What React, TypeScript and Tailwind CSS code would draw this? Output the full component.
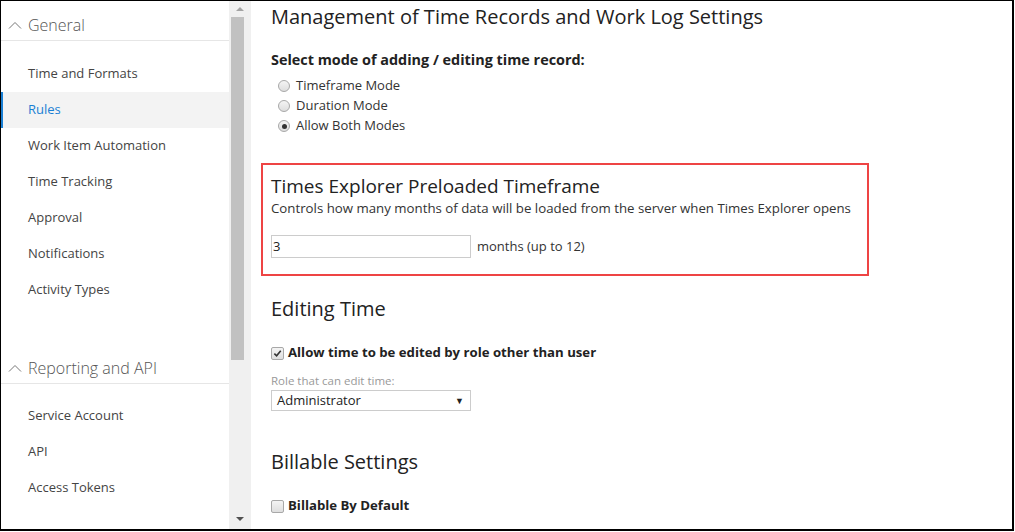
const font = { fontFamily: '"Open Sans", "Noto Sans", sans-serif' }

const generalItems = ['Time and Formats', 'Rules', 'Work Item Automation', 'Time Tracking', 'Approval', 'Notifications', 'Activity Types']
const reportingItems = ['Service Account', 'API', 'Access Tokens']

function NavItem({ label, active }: { label: string; active?: boolean }) {
  return (
    <div
      className={`h-9 flex items-center text-[13px] ${
        active ? 'bg-[#f3f3f3] text-[#1a7fd4] border-l-2 border-[#1a7fd4] pl-[25px]' : 'text-[#444] pl-[27px]'
      }`}
    >
      {label}
    </div>
  )
}

function SectionHeader({ label }: { label: string }) {
  return (
    <div className="h-[31px] flex items-center gap-[6px] pl-[7px] border-b border-[#e6e6e6] text-[16px] text-[#555] font-light">
      <svg width="14" height="8" viewBox="0 0 14 8" className="shrink-0">
        <path d="M1 7.5 L7 1.5 L13 7.5" fill="none" stroke="#777" strokeWidth="1" />
      </svg>
      <span>{label}</span>
    </div>
  )
}

function Radio({ label, checked }: { label: string; checked?: boolean }) {
  return (
    <div className="h-5 flex items-center gap-[6px] pl-[7px] text-[13px] text-[#333]">
      <span className="w-[12px] h-[12px] rounded-full border border-[#a8a8a8] bg-gradient-to-b from-[#f4f4f4] to-[#dedede] flex items-center justify-center">
        {checked && <span className="w-[5px] h-[5px] rounded-full bg-[#333]" />}
      </span>
      <span>{label}</span>
    </div>
  )
}

function Checkbox({ checked }: { checked?: boolean }) {
  return (
    <span className="w-[13px] h-[13px] rounded-[2px] border border-[#a8a8a8] bg-gradient-to-b from-[#f4f4f4] to-[#dedede] flex items-center justify-center">
      {checked && (
        <svg width="9" height="9" viewBox="0 0 10 10">
          <path d="M1.5 5.2 L4 7.6 L8.6 2" fill="none" stroke="#333" strokeWidth="1.8" />
        </svg>
      )}
    </span>
  )
}

function Scrollbar() {
  return (
    <div className="w-[22px] bg-[#f0f0f0] flex flex-col items-center shrink-0">
      <div className="h-[16px] flex items-center justify-center">
        <span className="w-0 h-0 border-l-[4px] border-r-[4px] border-b-[4px] border-l-transparent border-r-transparent border-b-[#a3a3a3]" />
      </div>
      <div className="w-[13px] h-[343px] bg-[#c1c1c1] -ml-[5px]" />
      <div className="flex-1" />
      <div className="h-[16px] flex items-center justify-center mb-[2px]">
        <span className="w-0 h-0 border-l-[4px] border-r-[4px] border-t-[4px] border-l-transparent border-r-transparent border-t-[#505050]" />
      </div>
    </div>
  )
}

export default function App() {
  return (
    <div className="w-[1015px] h-[532px] bg-white overflow-hidden" style={font}>
      <div className="w-[1014px] h-[531px] border-t border-l border-r-2 border-b-2 border-black flex overflow-hidden">
        {/* Sidebar */}
        <div className="w-[228px] shrink-0 flex flex-col pt-[9px]">
          <SectionHeader label="General" />
          <div className="pt-[15px]">
            {generalItems.map((item) => (
              <NavItem key={item} label={item} active={item === 'Rules'} />
            ))}
          </div>
          <div className="h-[45px]" />
          <SectionHeader label="Reporting and API" />
          <div className="pt-[14px]">
            {reportingItems.map((item) => (
              <NavItem key={item} label={item} />
            ))}
          </div>
        </div>

        <Scrollbar />

        {/* Content */}
        <div className="flex-1 pl-[20px] pt-[2px] text-[#222]">
          <h1 className="text-[20px] leading-[28px]">Management of Time Records and Work Log Settings</h1>
          <div className="mt-[19px] text-[14.4px] font-bold leading-5">Select mode of adding / editing time record:</div>
          <div className="mt-[6px]">
            <Radio label="Timeframe Mode" />
            <Radio label="Duration Mode" />
            <Radio label="Allow Both Modes" checked />
          </div>

          <div className="mt-[27px] -ml-[10px] w-[608px] h-[113px] border-2 border-[#ee4444] pl-[8px] pt-[8px]">
            <h2 className="text-[19px] leading-[26px]">Times Explorer Preloaded Timeframe</h2>
            <div className="text-[13.25px] text-[#333] leading-[18px]">
              Controls how many months of data will be loaded from the server when Times Explorer opens
            </div>
            <div className="mt-[18px] flex items-center gap-[6px]">
              <div className="w-[200px] h-[23px] border border-[#cccccc] text-[13px] flex items-center pl-[1px]">3</div>
              <span className="text-[13px] text-[#333]">months (up to 12)</span>
            </div>
          </div>

          <h2 className="mt-[19px] text-[20px] leading-[28px]">Editing Time</h2>
          <div className="mt-[20px] flex items-center gap-[4px] h-5">
            <Checkbox checked />
            <span className="text-[13.2px] font-bold">Allow time to be edited by role other than user</span>
          </div>
          <div className="mt-[9px] text-[11.5px] text-[#999] leading-[18px]">Role that can edit time:</div>
          <div className="w-[200px] h-[21px] border border-[#cccccc] text-[13px] flex items-center justify-between pl-[5px] pr-[6px]">
            <span>Administrator</span>
            <span className="text-[9px]">▼</span>
          </div>

          <h2 className="mt-[37px] text-[20px] leading-[28px]">Billable Settings</h2>
          <div className="mt-[20px] flex items-center gap-[4px] h-5">
            <Checkbox />
            <span className="text-[13.2px] font-bold">Billable By Default</span>
          </div>
        </div>
      </div>
    </div>
  )
}
